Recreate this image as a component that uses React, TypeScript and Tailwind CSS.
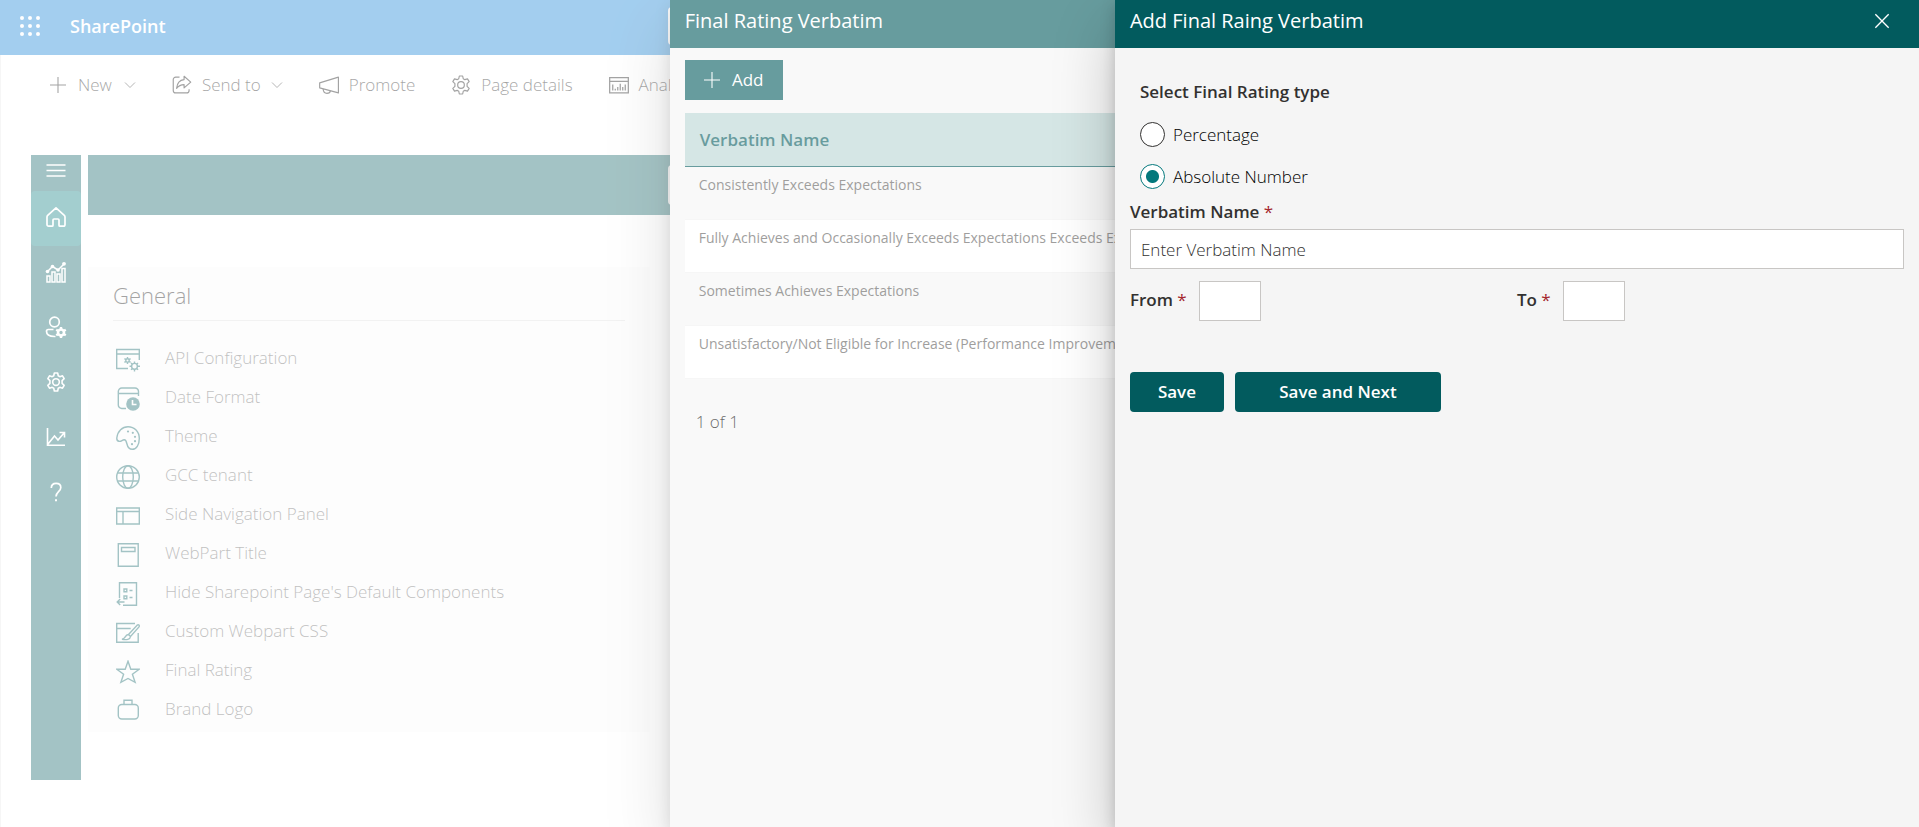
import type { ReactNode, SVGProps } from "react";

function Icon({ children, ...rest }: { children: ReactNode } & SVGProps<SVGSVGElement>) {
  return (
    <svg
      viewBox="0 0 24 24"
      fill="none"
      stroke="currentColor"
      strokeWidth="1.2"
      aria-hidden="true"
      {...rest}
    >
      {children}
    </svg>
  );
}

const gearPath =
  "M10 1.2h4l.7 3.3 1.9 1.1 3.2-1 2 3.4-2.5 2.3v3.4l2.5 2.3-2 3.4-3.2-1-1.9 1.1-.7 3.3h-4l-.7-3.3-1.9-1.1-3.2 1-2-3.4 2.5-2.3v-3.4L2.2 8l2-3.4 3.2 1 1.9-1.1z";

const PlusIcon = () => (
  <Icon className="size-4" strokeWidth="1.6">
    <path d="M12 0v24M0 12h24" />
  </Icon>
);

const ChevronIcon = () => (
  <Icon className="size-3" strokeWidth="1.6">
    <path d="M2 7l10 10L22 7" />
  </Icon>
);

const GearIcon = ({ className = "size-5", strokeWidth = 1.4 }: { className?: string; strokeWidth?: number }) => (
  <Icon className={className} strokeWidth={strokeWidth} strokeLinejoin="round">
    <path d={gearPath} />
    <circle cx="12" cy="12" r="4" />
  </Icon>
);

const ShareIcon = () => (
  <Icon className="size-5" strokeWidth="1.4" strokeLinejoin="round">
    <path d="M9 2.5H4.5a3 3 0 0 0-3 3v13a3 3 0 0 0 3 3h13a3 3 0 0 0 3-3V17" />
    <path d="M14.5 1.5l8 7-8 7v-4c-4 0-6.5 1.2-9 4.5.6-6 3.8-10 9-10.5z" />
  </Icon>
);

const MegaphoneIcon = () => (
  <Icon className="size-5" strokeWidth="1.4" strokeLinejoin="round">
    <path d="M23.3 2.5v19L.8 15.5v-6z" />
    <path d="M5 16.8c.2 3.2 2 5.2 4.5 5.2s4-1.5 4.2-3" />
  </Icon>
);

const ReportIcon = () => (
  <Icon className="size-5" strokeWidth="1.5">
    <path d="M.8 3h22.4v18.5H.8zM.8 7.5h22.4" />
    <path d="M4.5 18.5v-7M7.5 18.5v-2M10.5 18.5v-4M16.5 18.5v-4" />
    <path d="M13.5 18.5v-8M19.5 18.5v-7" />
  </Icon>
);

const navItems: { label: string; active?: boolean; icon: ReactNode }[] = [
  {
    label: "Home",
    active: true,
    icon: (
      <Icon className="size-6" strokeWidth="1.7" strokeLinejoin="round">
        <path d="M12 2.8l8.3 7.6c.4.4.7.9.7 1.5v7.6c0 1-.7 1.7-1.6 1.7H16c-.6 0-1-.4-1-1V15a1 1 0 0 0-1-1h-4a1 1 0 0 0-1 1v5.2c0 .6-.4 1-1 1H4.6c-.9 0-1.6-.7-1.6-1.7v-7.6c0-.6.3-1.1.7-1.5z" />
      </Icon>
    ),
  },
  {
    label: "Analytics",
    icon: (
      <Icon className="size-6" strokeWidth="1.5">
        <path d="M3 22v-6h3v6zM8 22V12h3v10zM13 22v-8h3v8zM18 22V8.5h3V22z" />
        <path d="M3.5 11.5l5-5 5.5 3.5 6-6" />
        <g fill="currentColor" stroke="none">
          <circle cx="3.5" cy="11.5" r="1.8" />
          <circle cx="8.5" cy="6.5" r="1.8" />
          <circle cx="14" cy="10" r="1.8" />
          <circle cx="20" cy="3.8" r="1.9" />
        </g>
      </Icon>
    ),
  },
  {
    label: "User settings",
    icon: (
      <Icon className="size-6" strokeWidth="1.7">
        <circle cx="10.5" cy="7" r="4.8" />
        <path d="M9.5 14.5H4.3c-1.1 0-1.8.8-1.8 1.8 0 3.4 3.5 5.2 8 5.2h1" />
        <circle cx="17" cy="17.5" r="3" strokeWidth="2.6" />
        <path
          d="M17 12v2M17 21v2M12.2 14.8l1.7 1M20.1 19.2l1.7 1M12.2 20.2l1.7-1M20.1 15.8l1.7-1"
          strokeWidth="2.4"
        />
      </Icon>
    ),
  },
  { label: "Settings", icon: <GearIcon className="size-5" strokeWidth={1.9} /> },
  {
    label: "Reports",
    icon: (
      <Icon className="size-6" strokeWidth="1.6">
        <path d="M3.5 3v17.2H21M4 19l6.5-8 3.5 4 6-7M15.5 7.5h5v5" />
      </Icon>
    ),
  },
  {
    label: "Help",
    icon: (
      <Icon className="size-6" strokeWidth="1.7">
        <path d="M7.3 8c0-3 2-4.7 4.8-4.7 2.9 0 4.7 1.7 4.7 4.2 0 4-4.8 4.2-4.8 9" />
        <path d="M11 19.2h2v2h-2z" fill="currentColor" stroke="none" />
      </Icon>
    ),
  },
];

const settings: { label: string; icon: ReactNode }[] = [
  {
    label: "API Configuration",
    icon: (
      <>
        <path d="M12 20.5H.7v-19h22.6V12M.7 6h22.6" />
        <circle cx="11.5" cy="12.5" r="1.7" />
        <path d="M11.5 9v2M11.5 14v2M8.4 10.7l1.7 1M13 13.3l1.6 1M8.4 14.3l1.7-1M13 11.7l1.6-1" />
        <circle cx="18.5" cy="18.3" r="2.9" />
        <path d="M18.5 13.5v2M18.5 21v2.5M13.5 18.3h2M21.5 18.3H24M15 15l1.4 1.3M20.6 20.4l1.5 1.4M15 21.8l1.5-1.4M20.6 16.3L22 15" />
      </>
    ),
  },
  {
    label: "Date Format",
    icon: (
      <>
        <path d="M10 21.5H6A3.5 3.5 0 0 1 2.3 18V4.5A3.5 3.5 0 0 1 6 1h13a3.5 3.5 0 0 1 3.5 3.5V9M2.3 6.5h20.2" />
        <circle cx="17" cy="17" r="6.8" fill="currentColor" stroke="none" />
        <path d="M16.5 13v4.5h4" stroke="#fafafa" strokeWidth="1.6" />
      </>
    ),
  },
  {
    label: "Theme",
    icon: (
      <>
        <path d="M.8 12C1.5 4.800 6.500.7 12 .7c6.500 0 11.300 5 11.300 11.800 0 6.300-3 10.800-7 10.800-7.300 0-4-9.500-8-9.500-2.300 0-2.800 2-5.300 1.500C1.300 15 .7 13.700.8 12z" />
        <g fill="currentColor" stroke="none">
          <circle cx="12" cy="5.5" r="1.1" />
          <circle cx="16.8" cy="6.8" r="1.1" />
          <circle cx="19" cy="10.8" r="1.1" />
          <circle cx="19" cy="15.2" r="1.1" />
          <circle cx="16" cy="18.2" r="1.1" />
        </g>
      </>
    ),
  },
  {
    label: "GCC tenant",
    icon: (
      <>
        <circle cx="12" cy="12" r="11.3" />
        <ellipse cx="12" cy="12" rx="5.3" ry="11.3" />
        <path d="M1.5 8h21M1.5 16h21" />
      </>
    ),
  },
  {
    label: "Side Navigation Panel",
    icon: <path d="M.7 4h22.6v16H.7zM.7 7.5h22.6M7 7.5V20" />,
  },
  {
    label: "WebPart Title",
    icon: <path d="M2.3.8h19.9v22.5H2.3zM5.5 4.5H19v4H5.5z" />,
  },
  {
    label: "Hide Sharepoint Page's Default Components",
    icon: (
      <>
        <path d="M3.5 16V.8h17v22.5H7" />
        <path d="M8 7h2.8v2.8H8zM8 14h2.8v2.8H8zM13.5 8.5h3M13.5 15.5h3" />
        <path d="M8.5 20H1.2M4.2 17l-3 3 3 3" />
      </>
    ),
  },
  {
    label: "Custom Webpart CSS",
    icon: (
      <>
        <path d="M19 2.5H.7v18.8h21.5V12M.7 7.5h14" />
        <path d="M12.5 13.5l8.6-9.3c1.5-1 2.7.2 1.9 1.7l-8.500 9.600zM12.500 13.500c-4 .5-2.500 4-6.500 4.800 4.500.8 8.200.2 8.500-2.800" />
      </>
    ),
  },
  {
    label: "Final Rating",
    icon: <path d="M12 1.3l2.8 8h8.4l-6.800 5 2.700 8L12 18.500l-7.100 3.800 2.700-8L.8 9.300h8.400z" />,
  },
  {
    label: "Brand Logo",
    icon: (
      <>
        <rect x="2.3" y="5.5" width="20" height="14.5" rx="3.5" />
        <path d="M8 5.500V1.200h8v4.300" />
      </>
    ),
  },
];

const verbatims = [
  "Consistently Exceeds Expectations",
  "Fully Achieves and Occasionally Exceeds Expectations Exceeds Expectations",
  "Sometimes Achieves Expectations",
  "Unsatisfactory/Not Eligible for Increase (Performance Improvement Plan)",
];

function Required() {
  return <span className="font-normal text-[#a4262c]"> *</span>;
}

function SitePage() {
  return (
    <div className="flex min-h-screen flex-col">
      <header className="flex h-[55px] items-center bg-[#0078d4] pb-1 text-white">
        <button type="button" aria-label="App launcher" className="ml-5 grid grid-cols-3 gap-1">
          {Array.from({ length: 9 }, (_, i) => (
            <span key={i} className="size-1 rounded-full bg-white" />
          ))}
        </button>
        <span className="ml-[30px] w-[598px] text-lg font-semibold">SharePoint</span>
        <div className="h-[38px] w-[400px] rounded bg-white" />
      </header>

      <div className="flex-1 border-l border-[#e6e6e6]">
        <nav className="flex h-[60px] items-center gap-9 pl-[49px] text-[17px] font-light text-black">
          <button type="button" className="flex items-center gap-3">
            <PlusIcon />
            New
            <ChevronIcon />
          </button>
          <button type="button" className="flex items-center gap-2.5">
            <ShareIcon />
            Send to
            <ChevronIcon />
          </button>
          <button type="button" className="flex items-center gap-2.5">
            <MegaphoneIcon />
            Promote
          </button>
          <button type="button" className="flex items-center gap-2.5">
            <GearIcon />
            Page details
          </button>
          <button type="button" className="flex items-center gap-2.5">
            <ReportIcon />
            Analytics
          </button>
        </nav>

        <div className="mt-10 flex items-start gap-[7px] pl-[30px]">
          <aside className="flex h-[625px] w-[50px] shrink-0 flex-col bg-[#025b5e] text-white">
            <button type="button" aria-label="Toggle menu" className="flex h-9 justify-center pt-1">
              <Icon className="size-6" strokeWidth="1.6">
                <path d="M2.5 6h19M2.5 11.5h19M2.5 17h19" />
              </Icon>
            </button>
            {navItems.map((item) => (
              <a
                key={item.label}
                href="#"
                aria-label={item.label}
                className={
                  item.active
                    ? "flex h-[55px] items-center justify-center rounded-sm bg-[#03787c] pb-1"
                    : "flex h-[55px] items-center justify-center pb-1"
                }
              >
                {item.icon}
              </a>
            ))}
          </aside>

          <main className="min-w-0 flex-1">
            <div className="flex h-[60px] items-center bg-[#025b5e] pl-[580px]">
              <div className="h-10 w-[300px] rounded bg-[#f4f4f4]" />
            </div>
            <section className="mt-[52px] w-[562px] bg-[#fafafa] px-[25px] pb-1">
              <h2 className="flex h-[54px] items-center border-b border-[#dddddd] pt-1 text-[22px] font-light text-black">
                General
              </h2>
              <ul className="pt-[17px]">
                {settings.map((item) => (
                  <li key={item.label}>
                    <a href="#" className="flex h-[39px] items-center gap-[25px] text-[17px] font-light text-[#505050]">
                      <Icon className="mt-1 ml-[3px] size-6 shrink-0 text-[#025b5e]" strokeWidth="1.4">
                        {item.icon}
                      </Icon>
                      {item.label}
                    </a>
                  </li>
                ))}
              </ul>
            </section>
          </main>
        </div>
      </div>
    </div>
  );
}

function VerbatimListPanel() {
  return (
    <section className="absolute inset-y-0 right-0 w-[65.1%] bg-[#f5f5f5] shadow-[0_26px_58px_rgba(0,0,0,0.22),0_5px_14px_rgba(0,0,0,0.18)]">
      <header className="flex h-12 items-center bg-[#025b5e] px-[15px] pb-1.5">
        <h2 className="text-xl text-white">Final Rating Verbatim</h2>
      </header>
      <div className="px-[15px] pt-3">
        <button
          type="button"
          className="flex h-10 w-[98px] items-center justify-center gap-3 bg-[#025b5e] text-[17px] text-white"
        >
          <PlusIcon />
          Add
        </button>
        <table className="mt-[13px] w-full text-left">
          <thead>
            <tr className="h-[53px] border-b border-[#025b5e] bg-[#b9d5d4]">
              <th className="px-[15px] text-[17px] font-semibold text-[#025b5e]">Verbatim Name</th>
            </tr>
          </thead>
          <tbody>
            {verbatims.map((name) => (
              <tr key={name} className="h-[53px] border-b border-[#f0f0f0] align-top even:bg-white">
                <td className="px-3.5 pt-2 text-sm leading-5 whitespace-nowrap text-[#605e5c]">{name}</td>
              </tr>
            ))}
          </tbody>
        </table>
        <p className="mt-[30px] pl-[11px] text-[17px] font-light text-black">1 of 1</p>
      </div>
    </section>
  );
}

const radioClass =
  "size-[25px] appearance-none rounded-full border border-[#323130] bg-white checked:border-[#03787c] checked:bg-[radial-gradient(circle,#03787c_6px,#ffffff_7px)]";

function AddVerbatimPanel() {
  return (
    <section className="absolute inset-y-0 right-0 w-[41.9%] bg-[#f5f5f5] text-[17px] text-[#323130] shadow-[0_26px_58px_rgba(0,0,0,0.22),0_5px_14px_rgba(0,0,0,0.18)]">
      <header className="flex h-12 items-center justify-between bg-[#025b5e] px-[15px] pb-1.5 text-white">
        <h2 className="text-xl">Add Final Raing Verbatim</h2>
        <button type="button" aria-label="Close" className="mr-3.5">
          <Icon className="size-4" strokeWidth="2">
            <path d="M2 2l20 20M22 2L2 22" />
          </Icon>
        </button>
      </header>
      <form className="px-[15px]">
        <fieldset className="flex flex-col gap-[17px] pt-8 pl-2.5">
          <legend className="float-left mb-px leading-6 font-semibold">Select Final Rating type</legend>
          <label className="flex h-[25px] items-center gap-2 font-light text-black">
            <input type="radio" name="ratingType" className={radioClass} />
            Percentage
          </label>
          <label className="flex h-[25px] items-center gap-2 font-light text-black">
            <input type="radio" name="ratingType" defaultChecked className={radioClass} />
            Absolute Number
          </label>
        </fieldset>
        <label htmlFor="verbatim-name" className="mt-[11px] block leading-6 font-semibold">
          Verbatim Name
          <Required />
        </label>
        <input
          id="verbatim-name"
          type="text"
          placeholder="Enter Verbatim Name"
          className="mt-[5px] block h-10 w-full border border-[#c8c6c4] bg-white px-2.5 font-light placeholder:text-[#323130]"
        />
        <div className="mt-3 grid grid-cols-2">
          <div className="flex items-center">
            <label htmlFor="range-from" className="w-[69px] pb-0.5 font-semibold">
              From
              <Required />
            </label>
            <input id="range-from" type="text" className="h-10 w-[62px] border border-[#c8c6c4] bg-white px-2" />
          </div>
          <div className="flex items-center">
            <label htmlFor="range-to" className="w-[46px] pb-0.5 font-semibold">
              To
              <Required />
            </label>
            <input id="range-to" type="text" className="h-10 w-[62px] border border-[#c8c6c4] bg-white px-2" />
          </div>
        </div>
        <div className="mt-[51px] flex gap-[11px] font-semibold text-white">
          <button type="button" className="h-10 w-[94px] rounded-sm bg-[#025b5e]">
            Save
          </button>
          <button type="button" className="h-10 w-[206px] rounded-sm bg-[#025b5e]">
            Save and Next
          </button>
        </div>
      </form>
    </section>
  );
}

export default function App() {
  return (
    <div className="relative min-h-screen overflow-hidden bg-white font-['Open_Sans','Noto_Sans',sans-serif]">
      <SitePage />
      <div className="absolute inset-0 bg-white/40" />
      <VerbatimListPanel />
      <div className="absolute inset-0 bg-white/40" />
      <AddVerbatimPanel />
    </div>
  );
}
